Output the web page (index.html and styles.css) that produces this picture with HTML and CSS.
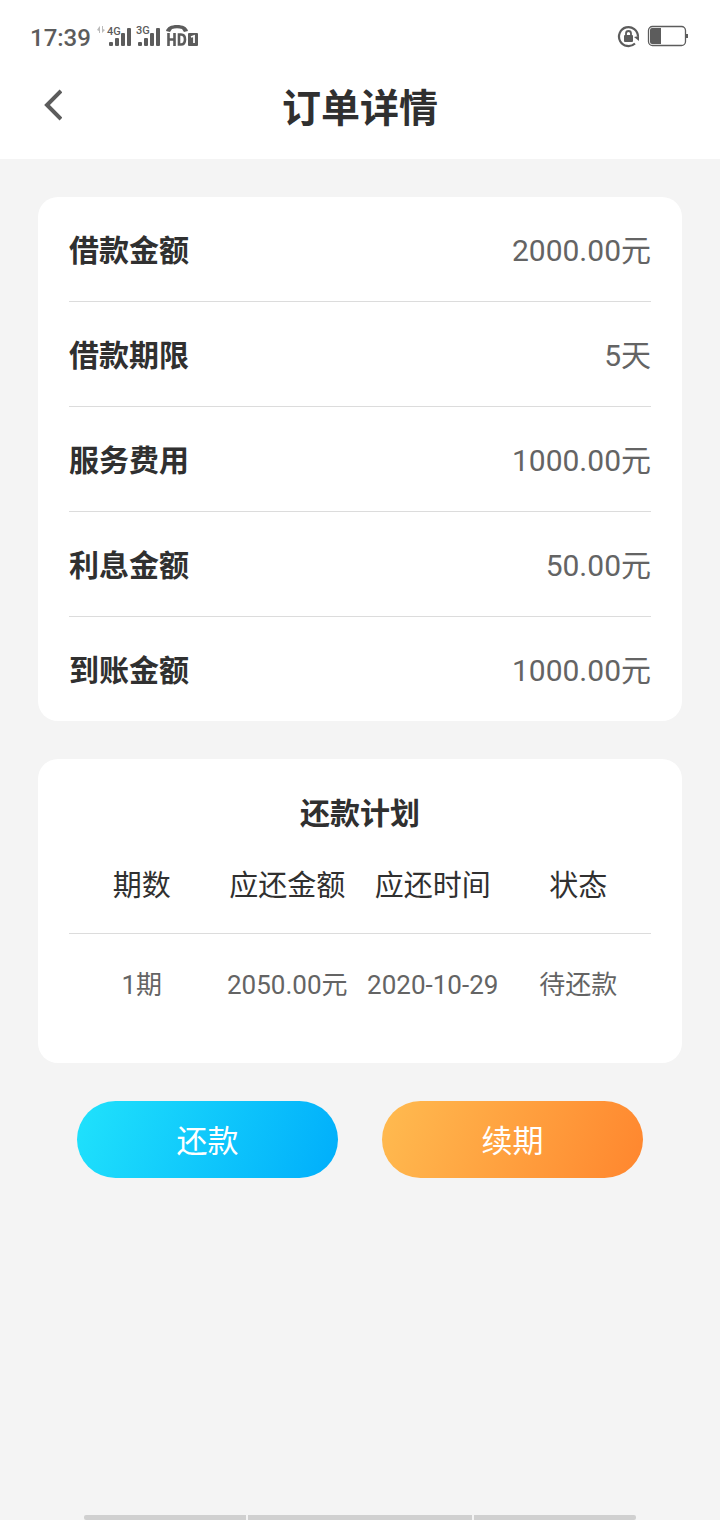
FILE: index.html
```html
<!DOCTYPE html>
<html lang="zh-CN">
<head>
  <meta charset="UTF-8">
  <meta name="viewport" content="width=device-width, initial-scale=1.0">
  <title>订单详情</title>
  <link rel="stylesheet" href="styles.css">
</head>
<body>
  <header class="header">
    <div class="status-bar">
      <span class="time">17:39</span>
      <svg class="signals" width="104" height="30" viewBox="96 20 104 30" fill="#5c5c5c">
        <path d="M100 26v7h-1v-2l-2-1 2-3zM102 26v7l3-3-2-1v-3z" fill="#bbb"/>
        <text x="107" y="35" font-size="11" font-weight="500">4G</text>
        <rect x="109" y="42" width="4" height="4" rx="1"/>
        <rect x="115" y="38" width="4" height="8" rx="1"/>
        <rect x="121" y="33" width="4" height="13" rx="1"/>
        <rect x="127" y="28" width="4" height="18" rx="1"/>
        <text x="136" y="34" font-size="11" font-weight="500">3G</text>
        <rect x="138" y="42" width="4" height="4" rx="1"/>
        <rect x="144" y="38" width="4" height="8" rx="1"/>
        <rect x="150" y="33" width="4" height="13" rx="1"/>
        <rect x="156" y="28" width="4" height="18" rx="1"/>
        <path d="M166 31c1-4 5-6 11-6s10 2 11 6l-4 1-2-3c-3-1-7-1-10 0l-2 3z"/>
        <path d="M168.500 33v13M174.500 33v13M168.500 39.500h6M179 34.500h2q4 0 4 5t-4 5h-2z" fill="none" stroke="#5c5c5c" stroke-width="2.600"/>
        <rect x="188" y="33" width="10" height="13" rx="1"/>
        <path d="M191 37l3-1v7" fill="none" stroke="#fff" stroke-width="1.800"/>
      </svg>
      <svg class="power" width="72" height="30" viewBox="617 20 72 30" fill="#5c5c5c">
        <path d="M635 43.500a9.500 9.500 0 1 1 3-7" fill="none" stroke="#5c5c5c" stroke-width="2.200"/>
        <path d="M634 37l5-1v5z"/>
        <rect x="624" y="35" width="9" height="7" rx="1"/>
        <path d="M626 36v-2.500a2.500 2.500 0 0 1 5 0V36" fill="none" stroke="#5c5c5c" stroke-width="1.800"/>
        <rect x="648.500" y="26.500" width="37" height="19" rx="4" fill="none" stroke="#5c5c5c" stroke-width="1.300"/>
        <path d="M652 28h9v16h-9q-2 0-2-2V30q0-2 2-2z"/>
        <rect x="686" y="34" width="2" height="4"/>
      </svg>
    </div>
    <div class="title-bar">
      <button type="button" class="back" aria-label="返回">
        <svg width="20" height="32" viewBox="0 0 20 32">
          <path d="M19 2L5 16l14 14" fill="none" stroke="#5c5c5c" stroke-width="4"/>
        </svg>
      </button>
      <h1>订单详情</h1>
    </div>
  </header>

  <main class="container">
    <dl class="card details">
      <div class="row"><dt>借款金额</dt><dd>2000.00元</dd></div>
      <div class="row"><dt>借款期限</dt><dd>5天</dd></div>
      <div class="row"><dt>服务费用</dt><dd>1000.00元</dd></div>
      <div class="row"><dt>利息金额</dt><dd>50.00元</dd></div>
      <div class="row"><dt>到账金额</dt><dd>1000.00元</dd></div>
    </dl>

    <section class="card plan">
      <h2>还款计划</h2>
      <table>
        <thead>
          <tr><th>期数</th><th>应还金额</th><th>应还时间</th><th>状态</th></tr>
        </thead>
        <tbody>
          <tr><td>1期</td><td>2050.00元</td><td>2020-10-29</td><td>待还款</td></tr>
        </tbody>
      </table>
    </section>

    <div class="actions">
      <button type="button" class="btn repay">还款</button>
      <button type="button" class="btn extend">续期</button>
    </div>
  </main>

  <div class="bottom-bar">
    <span></span>
    <span class="middle"></span>
    <span></span>
  </div>
</body>
</html>
```
FILE: styles.css
```css
* {
  box-sizing: border-box;
}
body {
  font-family: Roboto, "Noto Sans CJK SC", sans-serif;
  margin: 0;
  min-height: 100vh;
  display: flex;
  flex-direction: column;
  background-color: #f4f4f4;
  color: #303030;
}
h1,
h2,
dl,
dd {
  margin: 0;
}
button {
  font-family: inherit;
  border: none;
  cursor: pointer;
}

/* header */
.header {
  background-color: white;
}
.status-bar {
  display: flex;
  align-items: flex-start;
  height: 55px;
  padding: 20px 31px 0 30px;
  color: #5c5c5c;
}
.time {
  font-size: 24px;
  font-weight: 500;
  line-height: 36px;
}
.signals {
  margin-left: 5px;
}
.power {
  margin-left: auto;
}
.title-bar {
  display: grid;
  grid-template-columns: 64px 1fr 64px;
  align-items: center;
  height: 104px;
  padding: 0 20px;
}
.title-bar h1 {
  padding-top: 4px;
  font-size: 39px;
  font-weight: 700;
  line-height: 56px;
  text-align: center;
}
.back {
  display: flex;
  justify-content: center;
  padding: 10px 0 14px;
  background: none;
}

/* cards */
.container {
  padding: 38px;
}
.card {
  background-color: white;
  border-radius: 20px;
  padding: 0 31px;
  margin-bottom: 38px;
}
.row {
  display: flex;
  justify-content: space-between;
  align-items: center;
  height: 105px;
  padding-top: 4px;
  border-bottom: 1px solid #dcdcdc;
  font-size: 30px;
  line-height: 44px;
}
.row:last-child {
  height: 104px;
  border-bottom: none;
}
.row dt {
  font-weight: 700;
}
.row dd {
  color: #646464;
}

/* repayment plan */
.plan {
  padding-top: 32px;
  padding-bottom: 29px;
}
.plan h2 {
  padding-top: 1px;
  margin-bottom: -1px;
  font-size: 30px;
  font-weight: 700;
  line-height: 44px;
  text-align: center;
}
.plan table {
  width: 100%;
  table-layout: fixed;
  border-collapse: separate;
  border-spacing: 0;
  text-align: center;
  white-space: nowrap;
}
.plan th {
  height: 99px;
  padding: 4px 0 0;
  border-bottom: 1px solid #dcdcdc;
  font-size: 29px;
  font-weight: 400;
  line-height: 44px;
}
.plan td {
  height: 100px;
  padding: 29px 0 0;
  font-size: 26px;
  line-height: 44px;
  vertical-align: baseline;
  color: #646464;
}

/* buttons */
.actions {
  display: flex;
  gap: 44px;
  padding: 0 39px;
}
.btn {
  flex: 1;
  height: 77px;
  padding-bottom: 3px;
  border-radius: 39px;
  font-size: 31px;
  font-weight: 400;
  color: white;
}
.repay {
  background: linear-gradient(110deg, #20e2fc, #00aefb);
}
.extend {
  background: linear-gradient(110deg, #ffbb50, #ff862e);
}

.bottom-bar {
  display: flex;
  gap: 2px;
  margin-top: auto;
  padding: 0 84px;
}
.bottom-bar span {
  flex: 162;
  height: 5px;
  background-color: #d0d0d0;
}
.bottom-bar .middle {
  flex: 224;
}
.bottom-bar span:first-child {
  border-radius: 2px 0 0 2px;
}
.bottom-bar span:last-child {
  border-radius: 0 2px 2px 0;
}
```
